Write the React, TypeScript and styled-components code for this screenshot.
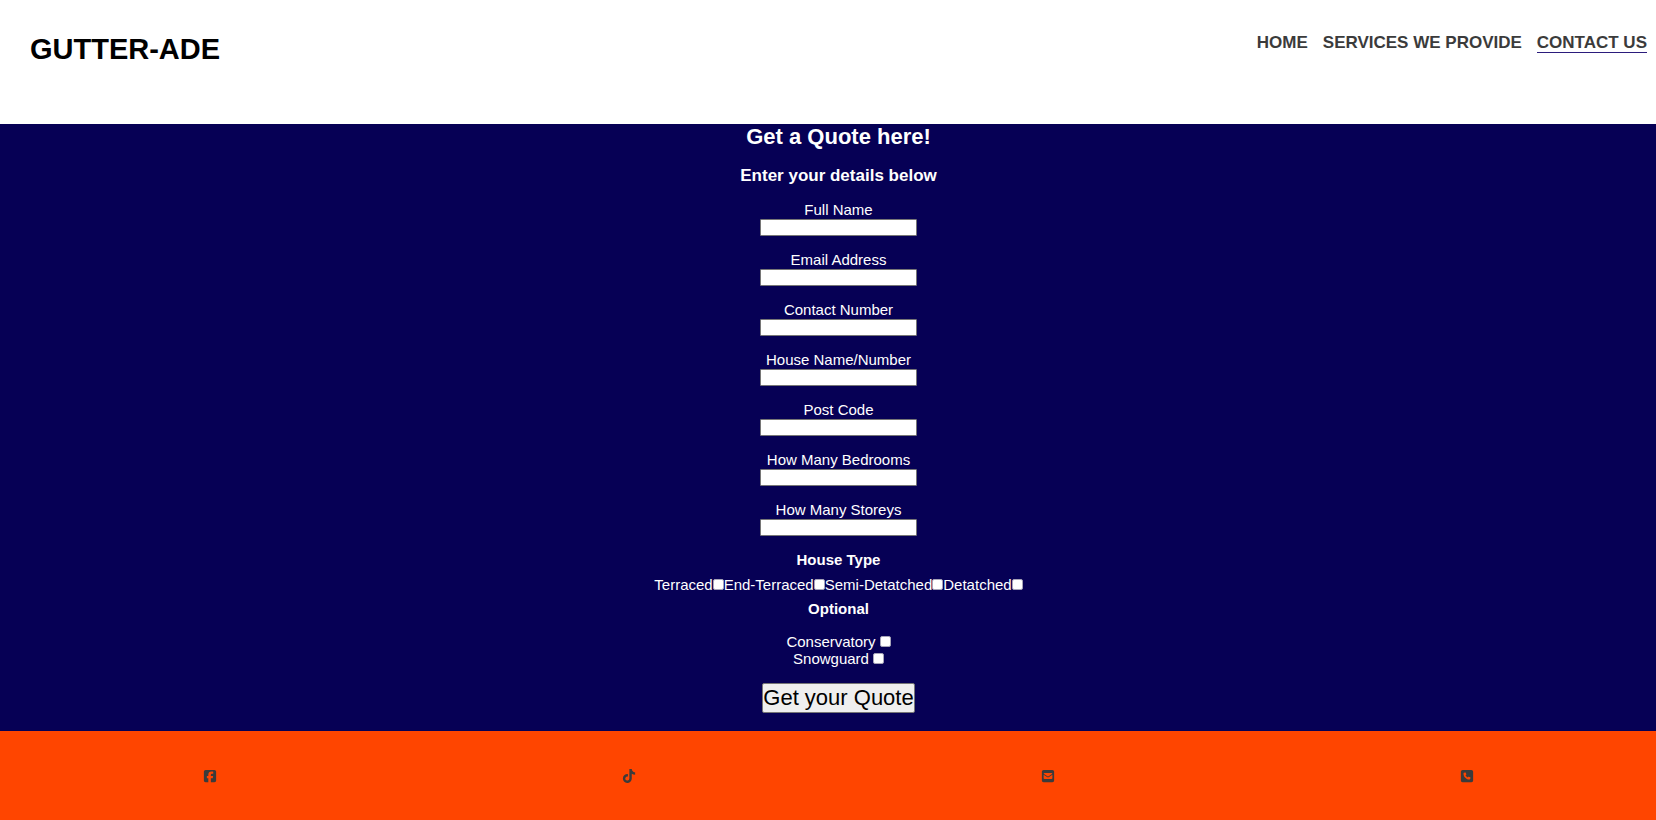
import React from "react";
import styled, { createGlobalStyle } from "styled-components";
import { FaSquareFacebook, FaTiktok, FaSquareEnvelope, FaSquarePhone } from "react-icons/fa6";

const GlobalStyle = createGlobalStyle`
  * { box-sizing: border-box; }
  html { overflow-x: hidden; background: #ff4500; }
  body {
    margin: 0;
    overflow-x: hidden;
    font-family: "Liberation Sans", Arial, sans-serif;
    font-size: 15px;
    line-height: 16px;
  }
`;

/* The page bleeds past the right edge of the window. */
const Page = styled.div`
  display: flex;
  flex-direction: column;
  min-height: 100vh;
  margin-right: -21px;
`;

const Header = styled.header`
  display: flex;
  justify-content: space-between;
  align-items: flex-start;
  min-height: 124px;
  padding: 33px 30px 0;
  background: #fff;
`;

const Brand = styled.h1`
  margin: 0;
  font-size: 29px;
  line-height: 32px;
  color: #000;
`;

const Nav = styled.nav`
  display: flex;
  gap: 15px;
`;

const NavLink = styled.a<{ $current?: boolean }>`
  border-bottom: 1px solid ${(p) => (p.$current ? "#2b1c7c" : "transparent")};
  color: #3b3b3b;
  font-size: 17px;
  font-weight: bold;
  line-height: 19px;
  text-decoration: none;
`;

const Main = styled.main`
  padding-bottom: 18px;
  background: #060055;
  color: #fff;
`;

const Form = styled.form`
  display: flex;
  flex-direction: column;
  align-items: center;
  gap: 16px;
`;

const Title = styled.h2`
  margin: 0;
  font-size: 22px;
  line-height: 25px;
`;

const Subtitle = styled.h3`
  margin: 0;
  font-size: 17px;
  line-height: 21px;
`;

const Fields = styled.div`
  display: flex;
  flex-direction: column;
  gap: 16px;
`;

const Field = styled.label`
  display: flex;
  flex-direction: column;
  align-items: center;
  gap: 1px;
`;

const TextInput = styled.input`
  width: 157px;
  height: 17px;
  padding: 1px 2px;
  border: 1px solid #767676;
  border-radius: 1px;
  background: #fff;
  font: inherit;
  font-size: 12px;
`;

const Group = styled.fieldset`
  display: flex;
  flex-direction: column;
  align-items: center;
  gap: 8px;
  margin: 0;
  padding: 0;
  border: 0;
`;

const Heading = styled.h4`
  margin: 0;
  font-size: 15px;
  line-height: 16px;
`;

const Types = styled.div`
  display: flex;
`;

const Extras = styled.div`
  display: flex;
  flex-direction: column;
  align-items: center;
`;

const Choice = styled.label<{ $gap?: number }>`
  display: flex;
  align-items: center;
  gap: ${(p) => p.$gap ?? 0}px;
  line-height: 17px;
`;

const Tick = styled.input`
  appearance: none;
  width: 11px;
  height: 11px;
  margin: 0;
  border: 1px solid #a5a3b8;
  border-radius: 2px;
  background: #fff;
  &:checked { background: #0075ff; }
`;

const Submit = styled.button`
  padding: 1px 0;
  border: 1px solid #767676;
  border-radius: 2px;
  background: #efefef;
  color: #000;
  font-family: inherit;
  font-size: 22px;
  line-height: 26px;
`;

const Footer = styled.footer`
  display: grid;
  grid-template-columns: repeat(4, 1fr);
  flex: 1;
  min-height: 88px;
  align-items: center;
  justify-items: center;
  background: #ff4500;
`;

const Social = styled.a`
  display: flex;
  color: #3b3b3b;
  font-size: 14px;
`;

const fields = [
  "Full Name",
  "Email Address",
  "Contact Number",
  "House Name/Number",
  "Post Code",
  "How Many Bedrooms",
  "How Many Storeys",
];
const houseTypes = ["Terraced", "End-Terraced", "Semi-Detatched", "Detatched"];
const extras = ["Conservatory", "Snowguard"];
const socials = [
  { name: "Facebook", Icon: FaSquareFacebook },
  { name: "TikTok", Icon: FaTiktok },
  { name: "Email", Icon: FaSquareEnvelope },
  { name: "Phone", Icon: FaSquarePhone },
];

export default function App() {
  return (
    <>
      <GlobalStyle />
      <Page>
        <Header>
          <Brand>GUTTER-ADE</Brand>
          <Nav>
            <NavLink href="#home">HOME</NavLink>
            <NavLink href="#services">SERVICES WE PROVIDE</NavLink>
            <NavLink href="#contact" $current aria-current="page">CONTACT US</NavLink>
          </Nav>
        </Header>
        <Main>
          <Form onSubmit={(e) => e.preventDefault()}>
            <Title>Get a Quote here!</Title>
            <Subtitle>Enter your details below</Subtitle>
            <Fields>
              {fields.map((name) => (
                <Field key={name}>
                  {name}
                  <TextInput type="text" name={name} />
                </Field>
              ))}
            </Fields>
            <Group aria-label="House Type">
              <Heading>House Type</Heading>
              <Types>
                {houseTypes.map((name) => (
                  <Choice key={name}>
                    {name}
                    <Tick type="checkbox" name={name} />
                  </Choice>
                ))}
              </Types>
              <Heading>Optional</Heading>
            </Group>
            <Extras>
              {extras.map((name) => (
                <Choice key={name} $gap={4}>
                  {name}
                  <Tick type="checkbox" name={name} />
                </Choice>
              ))}
            </Extras>
            <Submit type="submit">Get your Quote</Submit>
          </Form>
        </Main>
        <Footer>
          {socials.map(({ name, Icon }) => (
            <Social key={name} href={`#${name.toLowerCase()}`} aria-label={name}>
              <Icon />
            </Social>
          ))}
        </Footer>
      </Page>
    </>
  );
}
